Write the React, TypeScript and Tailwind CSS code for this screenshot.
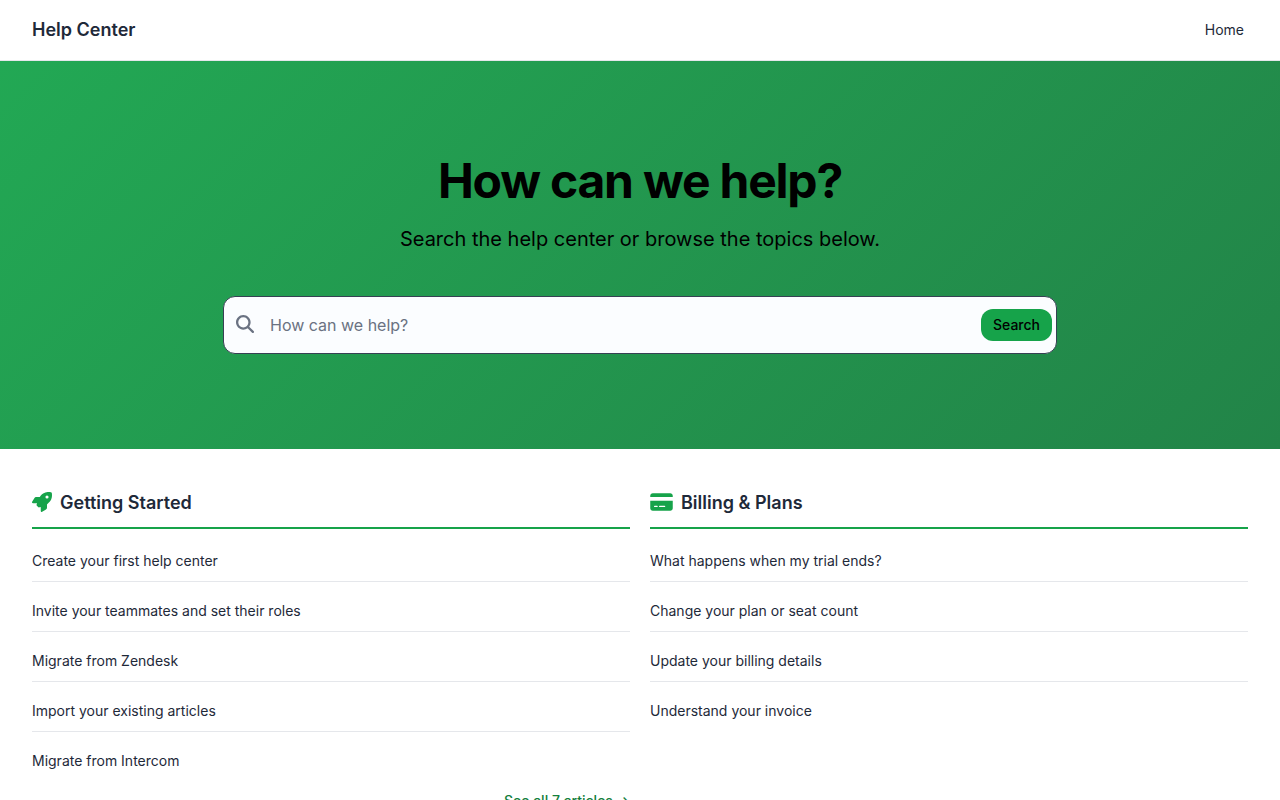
import { FaCreditCard, FaMagnifyingGlass, FaRocket } from "react-icons/fa6";
import type { IconType } from "react-icons";

interface Category {
  title: string;
  icon: IconType;
  iconClass: string;
  articles: string[];
  total: number;
}

const categories: Category[] = [
  {
    title: "Getting Started",
    icon: FaRocket,
    iconClass: "size-5",
    articles: [
      "Create your first help center",
      "Invite your teammates and set their roles",
      "Migrate from Zendesk",
      "Import your existing articles",
      "Migrate from Intercom",
    ],
    total: 7,
  },
  {
    title: "Billing & Plans",
    icon: FaCreditCard,
    iconClass: "h-5 w-[23px]",
    articles: [
      "What happens when my trial ends?",
      "Change your plan or seat count",
      "Update your billing details",
      "Understand your invoice",
    ],
    total: 4,
  },
];

function CategoryCard({ category }: { category: Category }) {
  const Icon = category.icon;
  const last = category.articles.length - 1;

  return (
    <section>
      <h2 className="flex items-center gap-2 border-b-2 border-[#16a34a] pb-[10px] text-lg leading-7 font-semibold">
        <Icon className={`${category.iconClass} mb-0.5 text-[#16a34a]`} />
        {category.title}
      </h2>
      <ul className="pt-[3px]">
        {category.articles.map((article, i) => (
          <li key={article} className={i < last ? "border-b border-gray-200" : ""}>
            <a href="#" className="block pt-[18px] pb-[10px] text-sm leading-[21px]">
              {article}
            </a>
          </li>
        ))}
      </ul>
      {category.total > category.articles.length && (
        <div className="flex justify-end pt-[10px] pb-10">
          <a href="#" className="text-sm font-medium text-[#15803d]">
            See all {category.total} articles →
          </a>
        </div>
      )}
    </section>
  );
}

export default function App() {
  return (
    <div className="min-h-screen bg-white font-['Inter',sans-serif] text-gray-800">
      <header className="flex items-center justify-between border-b border-gray-200 px-8 py-4">
        <a href="#" className="text-lg leading-7 font-semibold">Help Center</a>
        <nav className="flex px-1">
          <a href="#" className="text-sm">Home</a>
        </nav>
      </header>

      <div className="flex flex-col items-center bg-linear-135 from-[#22a854] to-[#228448] px-8 pt-24 pb-[95px] text-black">
        <h1 className="text-5xl leading-none font-bold tracking-tight">How can we help?</h1>
        <p className="mt-5 text-xl leading-7">Search the help center or browse the topics below.</p>
        <form className="mt-[43px] flex h-[58px] w-full max-w-[834px] items-center rounded-xl border border-gray-700 bg-[#fbfdff] pr-1 pl-3">
          <FaMagnifyingGlass className="mb-0.5 size-[18px] text-gray-500" />
          <input
            type="search"
            aria-label="Search articles"
            placeholder="How can we help?"
            className="flex-1 bg-transparent px-4 text-base outline-none placeholder:text-gray-500"
          />
          <button type="submit" className="h-8 rounded-xl bg-[#16a34a] px-3 text-sm font-medium">Search</button>
        </form>
      </div>

      <main className="grid grid-cols-2 gap-5 px-8 pt-10">
        {categories.map((category) => (
          <CategoryCard key={category.title} category={category} />
        ))}
      </main>
    </div>
  );
}
